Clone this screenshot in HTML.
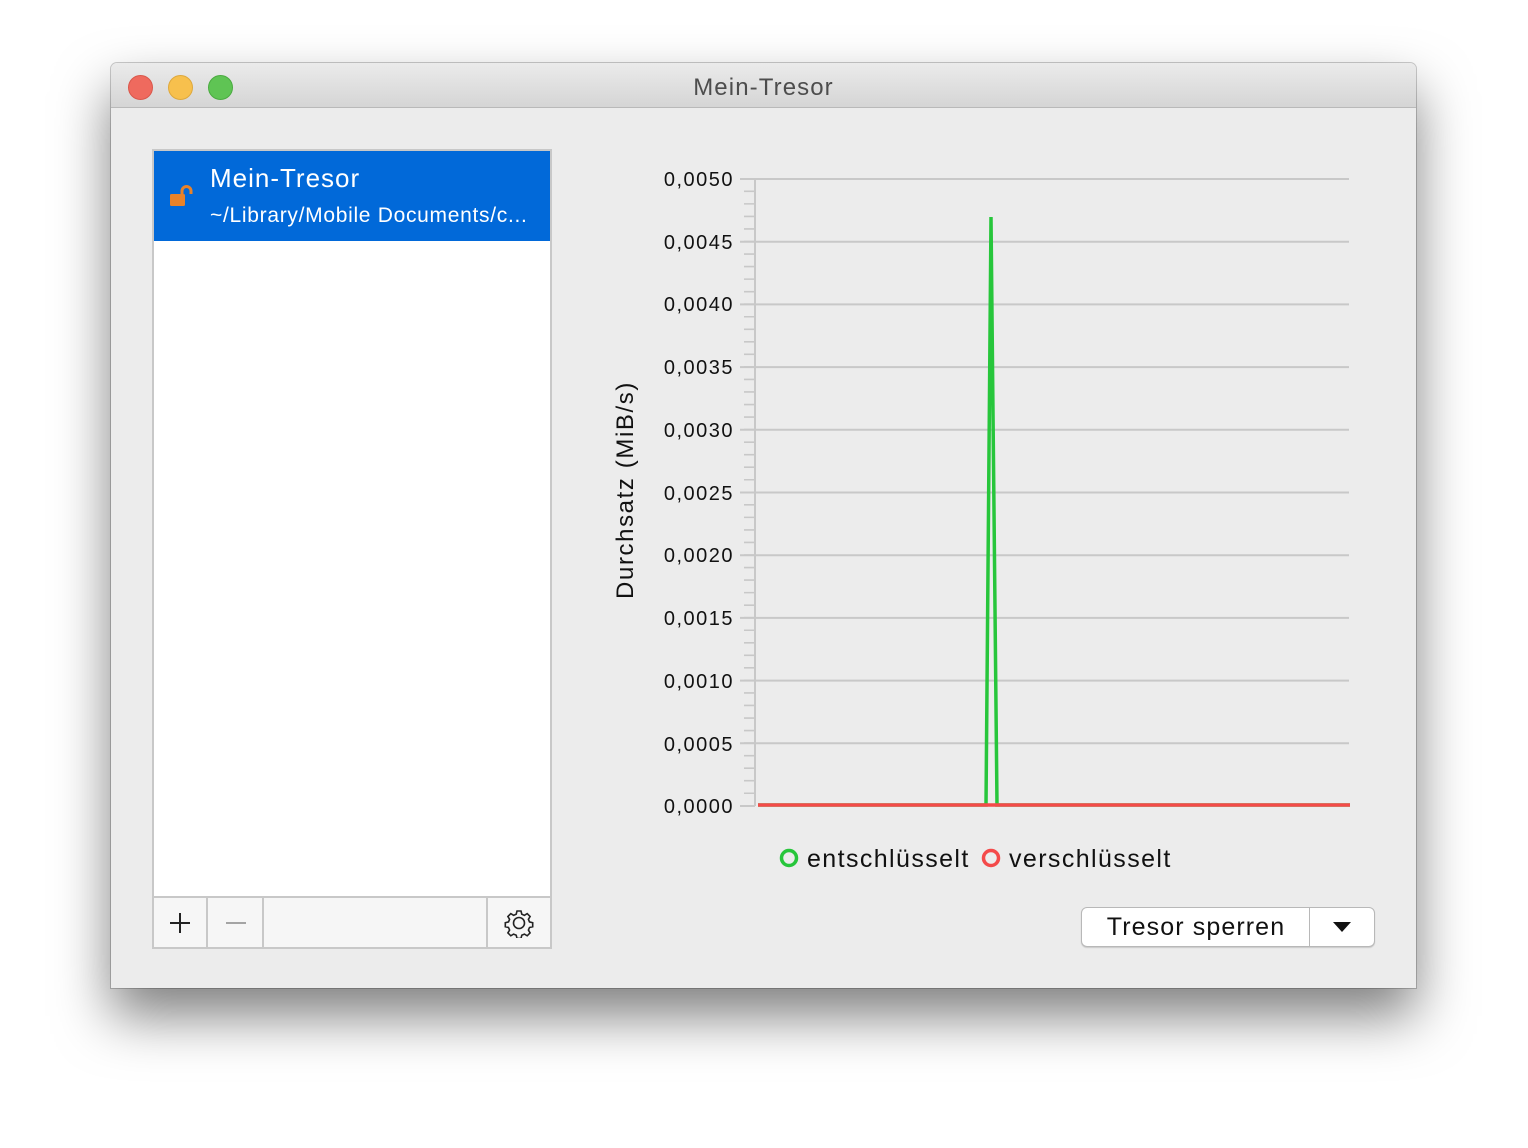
<!DOCTYPE html>
<html><head><meta charset="utf-8"><style>
body{margin:0;width:1528px;height:1148px;background:#fff;font-family:"Liberation Sans",sans-serif;position:relative;overflow:hidden}
.win{position:absolute;left:111px;top:63px;width:1305px;height:925px;background:#ececec;border-radius:6px 6px 0 0;box-shadow:0 28px 55px rgba(0,0,0,.5),0 0 0 1px rgba(0,0,0,.2);overflow:hidden}
.tb{position:absolute;left:0;top:0;right:0;height:44px;background:linear-gradient(#ebebeb,#d5d5d5);border-bottom:1px solid #b9b9b9;text-align:center;line-height:50px;font-size:24px;color:#4d4d4d;letter-spacing:1.1px}
.dot{position:absolute;top:12px;width:23px;height:23px;border-radius:50%}
.list{position:absolute;left:41px;top:86px;width:396px;height:796px;background:#fff;border:2px solid #c8c8c8}
.sel{position:absolute;left:0;top:0;width:396px;height:90px;background:#0169d9;color:#fff}
.bar{position:absolute;left:41px;top:833px;width:396px;height:49px;background:#f6f6f6;border:2px solid #c8c8c8}
.btn{position:absolute;left:970px;top:844px;width:292px;height:38px;background:#fff;border:1px solid #b8b8b8;border-radius:6px;box-shadow:0 1px 1px rgba(0,0,0,.15)}
</style></head><body>
<div class="win">
<div class="tb">Mein-Tresor
<div class="dot" style="left:17px;background:#ef6a5e;border:1px solid #d9574b"></div>
<div class="dot" style="left:57px;background:#f7c04d;border:1px solid #dea83c"></div>
<div class="dot" style="left:97px;background:#5fc454;border:1px solid #4aab40"></div>
</div>
<div class="list"><div class="sel">
<svg style="position:absolute;left:14px;top:34px" width="28" height="24"><rect x="2" y="9" width="15" height="12" rx="1.5" fill="#e88229"/><path d="M14 10 V6 a4.5 4.5 0 0 1 9 0 V9" stroke="#e88229" stroke-width="3" fill="none"/></svg>
<div style="position:absolute;left:56px;top:12px;font-size:26px;letter-spacing:1px">Mein-Tresor</div>
<div style="position:absolute;left:56px;top:53px;font-size:21px;letter-spacing:0.7px">~/Library/Mobile Documents/c...</div>
</div></div>
<div class="bar">
<div style="position:absolute;left:52px;top:0;width:2px;height:49px;background:#c8c8c8"></div>
<div style="position:absolute;left:108px;top:0;width:2px;height:49px;background:#c8c8c8"></div>
<div style="position:absolute;left:332px;top:0;width:2px;height:49px;background:#c8c8c8"></div>
<svg style="position:absolute;left:14px;top:13px" width="24" height="24"><path d="M12 2V22M2 12H22" stroke="#222" stroke-width="2"/></svg>
<svg style="position:absolute;left:70px;top:13px" width="24" height="24"><path d="M2 12H22" stroke="#888" stroke-width="1.5"/></svg>
<svg style="position:absolute;left:350px;top:10px" width="30" height="30" viewBox="0 0 30 30"><g fill="none" stroke="#222" stroke-width="1.6"><circle cx="15" cy="15" r="5.5"/><path d="M13 3h4l.8 3.2 2.6 1.1 2.8-1.7 2.9 2.9-1.7 2.8 1.1 2.6 3.2.8v4l-3.2.8-1.1 2.6 1.7 2.8-2.9 2.9-2.8-1.7-2.6 1.1-.8 3.2h-4l-.8-3.2-2.6-1.1-2.8 1.7-2.9-2.9 1.7-2.8-1.1-2.6-3.2-.8v-4l3.2-.8 1.1-2.6-1.7-2.8 2.9-2.9 2.8 1.7 2.6-1.1z"/></g></svg>
</div>
<div class="btn">
<div style="position:absolute;left:0;width:228px;top:0;line-height:38px;text-align:center;font-size:25px;color:#111;letter-spacing:1.1px">Tresor sperren</div>
<div style="position:absolute;left:227px;top:0;width:1px;height:38px;background:#b8b8b8"></div>
<svg style="position:absolute;left:250px;top:13px" width="20" height="12"><path d="M1 1H19L10 11Z" fill="#111"/></svg>
</div>
</div>
<svg style="position:absolute;left:0;top:0" width="1528" height="1148">
<g stroke="#c8c8c8" stroke-width="2">
<path d="M755 179H1349M755 241.7H1349M755 304.4H1349M755 367.1H1349M755 429.8H1349M755 492.5H1349M755 555.2H1349M755 617.9H1349M755 680.6H1349M755 743.3H1349M740 179H755M740 241.7H755M740 304.4H755M740 367.1H755M740 429.8H755M740 492.5H755M740 555.2H755M740 617.9H755M740 680.6H755M740 743.3H755M740 806H755"/>
<path d="M755 178V806"/>
<line x1="749" y1="178" x2="749" y2="806" stroke-width="10" stroke-dasharray="1.6 10.94"/>
</g>
<g font-size="20" fill="#111" text-anchor="end" font-family="Liberation Sans,sans-serif" letter-spacing="1.5">
<text x="734" y="186">0,0050</text><text x="734" y="249">0,0045</text><text x="734" y="311">0,0040</text><text x="734" y="374">0,0035</text><text x="734" y="437">0,0030</text><text x="734" y="500">0,0025</text><text x="734" y="562">0,0020</text><text x="734" y="625">0,0015</text><text x="734" y="688">0,0010</text><text x="734" y="751">0,0005</text><text x="734" y="813">0,0000</text>
</g>
<text transform="translate(633,490) rotate(-90)" text-anchor="middle" font-size="24" fill="#111" font-family="Liberation Sans,sans-serif" letter-spacing="1.6">Durchsatz (MiB/s)</text>
<polyline points="758,805 986,805 991,217 997,805 1350,805" fill="none" stroke="#27c63b" stroke-width="3.5"/>
<line x1="758" y1="805" x2="1350" y2="805" stroke="#f44a4a" stroke-width="3.5"/>
<circle cx="789" cy="858" r="7.5" fill="none" stroke="#27c63b" stroke-width="3.5"/>
<text x="807" y="867" font-size="25" fill="#111" font-family="Liberation Sans,sans-serif" letter-spacing="1.4">entschlüsselt</text>
<circle cx="991" cy="858" r="7.5" fill="none" stroke="#f44a4a" stroke-width="3.5"/>
<text x="1009" y="867" font-size="25" fill="#111" font-family="Liberation Sans,sans-serif" letter-spacing="1.4">verschlüsselt</text>
</svg>
</body></html>
